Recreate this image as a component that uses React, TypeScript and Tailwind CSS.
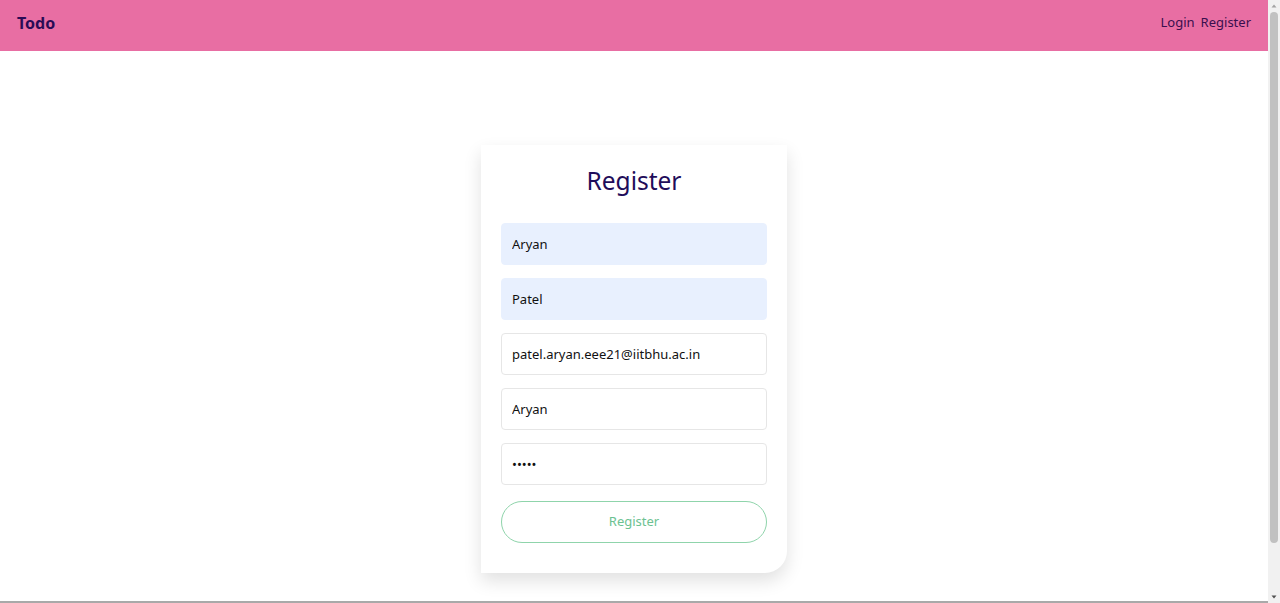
import React from "react";

const font = { fontFamily: "'Noto Sans', 'Open Sans', sans-serif" };

function Field({ value, filled, type = "text" }: { value: string; filled?: boolean; type?: string }) {
  return (
    <input
      readOnly
      type={type}
      value={value}
      className={`h-[42px] w-full rounded-[4px] border px-[10px] text-[13px] text-[#111] outline-none ${
        filled ? "border-[#e8f0fe] bg-[#e8f0fe]" : "border-[#e6e6e6] bg-white"
      }`}
      style={font}
    />
  );
}

function Scrollbar() {
  return (
    <div className="flex h-[603px] w-[12px] shrink-0 flex-col items-center bg-[#f1f1f1]">
      <svg width="12" height="12" viewBox="0 0 12 12" className="shrink-0">
        <path d="M3.5 7.5 L6 4.5 L8.5 7.5 Z" fill="#a3a3a3" />
      </svg>
      <div className="h-[531px] w-[8px] rounded-[4px] bg-[#c1c1c1]" />
      <div className="flex-1" />
      <svg width="12" height="12" viewBox="0 0 12 12" className="shrink-0">
        <path d="M3.5 4.5 L6 7.5 L8.5 4.5 Z" fill="#505050" />
      </svg>
    </div>
  );
}

export default function App() {
  return (
    <div className="flex h-[603px] w-full overflow-hidden bg-white" style={font}>
      <div className="flex min-w-0 flex-1 flex-col">
        <header className="flex h-[51px] shrink-0 items-center justify-between bg-[#e86ea3] px-[17px] pb-[5px]">
          <span className="text-[16px] font-bold text-[#2a0b55]">Todo</span>
          <nav className="flex gap-[6px] text-[13px] text-[#3a0f4e]">
            <a>Login</a>
            <a>Register</a>
          </nav>
        </header>
        <main className="flex flex-1 justify-center pt-[94px]">
          <div className="flex h-[428px] w-[306px] flex-col rounded-br-[22px] bg-white px-[20px] pt-[18px] pb-[30px] shadow-[0_8px_18px_rgba(0,0,0,0.12)]">
            <h1 className="mb-[24px] text-center text-[24.5px] leading-[36px] text-[#1f0d5a]">Register</h1>
            <div className="flex flex-col gap-[13px]">
              <Field value="Aryan" filled />
              <Field value="Patel" filled />
              <Field value="patel.aryan.eee21@iitbhu.ac.in" />
              <Field value="Aryan" />
              <Field value="aryan" type="password" />
            </div>
            <button
              className="mt-[16px] h-[42px] w-full rounded-full border border-[#8fd4ab] bg-white text-[13px] text-[#6cc291]"
              style={font}
            >
              Register
            </button>
          </div>
        </main>
        <div className="h-[2px] w-full shrink-0 bg-[#a9a9a9]" />
      </div>
      <Scrollbar />
    </div>
  );
}
